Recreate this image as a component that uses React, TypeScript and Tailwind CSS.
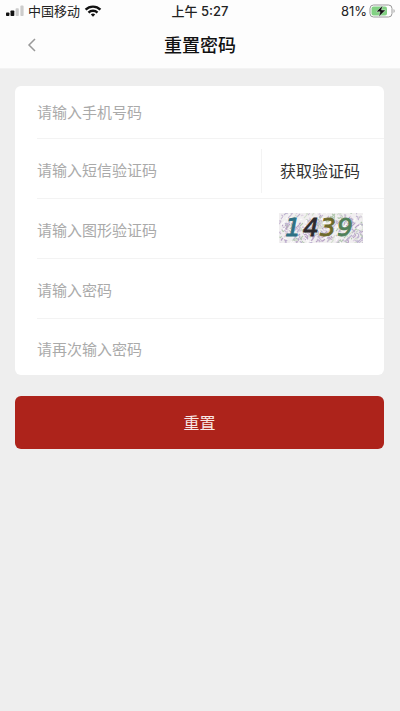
import { InputHTMLAttributes, ReactNode } from 'react';

const FONT = 'font-["Inter","Noto_Sans_CJK_SC",sans-serif]';

function StatusBar() {
    return (
        <div className="grid grid-cols-3 items-center h-[22px] px-1 text-[13px] leading-5 text-[#222]">
            <div className="flex items-center gap-1">
                <svg width="20" height="12" viewBox="0 0 20 12">
                    <rect x="2" y="7.5" width="3.4" height="3.5" rx="0.8" fill="#111" />
                    <rect x="6.5" y="5.5" width="3.8" height="5.5" rx="0.8" fill="#111" />
                    <rect x="11.6" y="3.2" width="3.2" height="7.8" rx="0.8" fill="#ccc" />
                    <rect x="16.4" y="0.6" width="3.2" height="10.4" rx="0.8" fill="#ccc" />
                </svg>
                <span>中国移动</span>
                <svg width="18" height="12" viewBox="0 0 18 12" fill="none" stroke="#111" strokeWidth="2.4">
                    <path d="M1.6 4.6a10.6 10.6 0 0 1 14.8 0" />
                    <path d="M4.5 7.6a6.5 6.5 0 0 1 9 0" />
                    <path d="M9 11.8 6.8 9.6a3.2 3.2 0 0 1 4.4 0Z" fill="#111" stroke="none" />
                </svg>
            </div>
            <span className="text-center font-medium">上午 5:27</span>
            <div className="flex items-center justify-end gap-[2px]">
                <span>81%</span>
                <svg width="27" height="14" viewBox="0 0 27 14">
                    <rect x="1" y="1" width="22" height="12" rx="3.5" fill="#fff" stroke="#999" />
                    <rect x="2.5" y="2.5" width="15.5" height="9" rx="2" fill="#82d183" />
                    <path d="M24.5 5v4a2.2 2.2 0 0 0 0-4Z" fill="#aaa" />
                    <path d="M13.6 1.4 7.2 7.8h3.9l-1.3 5L16.6 6h-4.1Z" fill="#111" stroke="#fff" strokeWidth="0.4" />
                </svg>
            </div>
        </div>
    );
}

interface FieldProps extends InputHTMLAttributes<HTMLInputElement> {
    label: string;
    extra?: ReactNode;
}

function Field({ label, extra, ...props }: FieldProps) {
    return (
        <div className="flex items-center h-[60px] pt-1 border-b border-[#f3f3f3] first:h-[53px] first:pt-0 last:h-14 last:border-b-0">
            <input
                {...props}
                aria-label={label}
                placeholder={label}
                className="flex-1 min-w-0 h-10 text-[15px] bg-transparent outline-none placeholder:text-[#aaa]"
            />
            {extra}
        </div>
    );
}

const digits = [
    { value: '1', x: 6, fill: '#2f7184' },
    { value: '4', x: 24, fill: '#2e2a2c' },
    { value: '3', x: 41, fill: '#6d6a2c' },
    { value: '9', x: 58, fill: '#4f8059' },
];

const noiseColors = ['#b9a3c6', '#c9bcd4', '#b3c9b0', '#ddd0e2', '#bdb3d0', '#d5dfd0', '#fbfafb'];

const rand = (n: number) => {
    const v = Math.sin(n * 12.9898) * 43758.5453;
    return v - Math.floor(v);
};

// short scribbles behind the digits
const noise = Array.from({ length: 330 }, (_, i) => {
    const x = Math.round(rand(i + 1) * 84);
    const y = Math.round(rand(i + 401) * 30);
    const dx = Math.round(rand(i + 801) * 8) - 4;
    const dy = Math.round(rand(i + 1201) * 8) - 3;
    return { d: `M${x} ${y}q${dy} ${dx} ${dx} ${dy}`, stroke: noiseColors[i % noiseColors.length] };
});

function Captcha() {
    return (
        <button type="button" aria-label="刷新图形验证码" className="shrink-0">
            <svg width="84" height="30" viewBox="0 0 84 30" className="block bg-[#f1eff0]">
                {noise.map((line, i) => (
                    <path key={i} d={line.d} stroke={line.stroke} strokeWidth="1.1" fill="none" />
                ))}
                <g fontFamily="DejaVu Sans" fontSize="25" fontStyle="italic">
                    {digits.map((digit) => (
                        <text
                            key={digit.value}
                            x={digit.x}
                            y="23"
                            fill={digit.fill}
                            stroke={digit.fill}
                            strokeWidth="0.8"
                        >
                            {digit.value}
                        </text>
                    ))}
                </g>
            </svg>
        </button>
    );
}

export default function App() {
    return (
        <div className={`min-h-screen bg-[#eee] ${FONT}`}>
            <header className="bg-[#fdfdfd] border-b border-[#f3f3f3]">
                <StatusBar />
                <div className="grid grid-cols-3 items-center h-[46px] px-6">
                    <button type="button" aria-label="返回" className="w-4">
                        <svg width="16" height="16" viewBox="0 0 16 16" fill="none" stroke="#999" strokeWidth="1.5">
                            <path d="M11 2 5 8l6 6" />
                        </svg>
                    </button>
                    <h1 className="pt-[2px] text-center text-lg font-medium text-[#111]">重置密码</h1>
                </div>
            </header>

            <main className="pl-[15px] pr-4 pt-[17px]">
                <form>
                    <div className="pl-[22px] bg-white rounded-md">
                        <Field label="请输入手机号码" type="tel" />
                        <Field
                            label="请输入短信验证码"
                            type="text"
                            extra={
                                <button
                                    type="button"
                                    className="shrink-0 h-11 pl-[18px] pr-6 border-l border-[#f3f3f3] text-base text-[#333]"
                                >
                                    获取验证码
                                </button>
                            }
                        />
                        <Field
                            label="请输入图形验证码"
                            type="text"
                            extra={
                                <div className="pr-[21px]">
                                    <Captcha />
                                </div>
                            }
                        />
                        <Field label="请输入密码" type="password" />
                        <Field label="请再次输入密码" type="password" />
                    </div>
                    <button
                        type="submit"
                        className="w-full h-[53px] mt-[21px] rounded-md bg-[#ad231b] text-base text-[#f8e8e6]"
                    >
                        重置
                    </button>
                </form>
            </main>
        </div>
    );
}
